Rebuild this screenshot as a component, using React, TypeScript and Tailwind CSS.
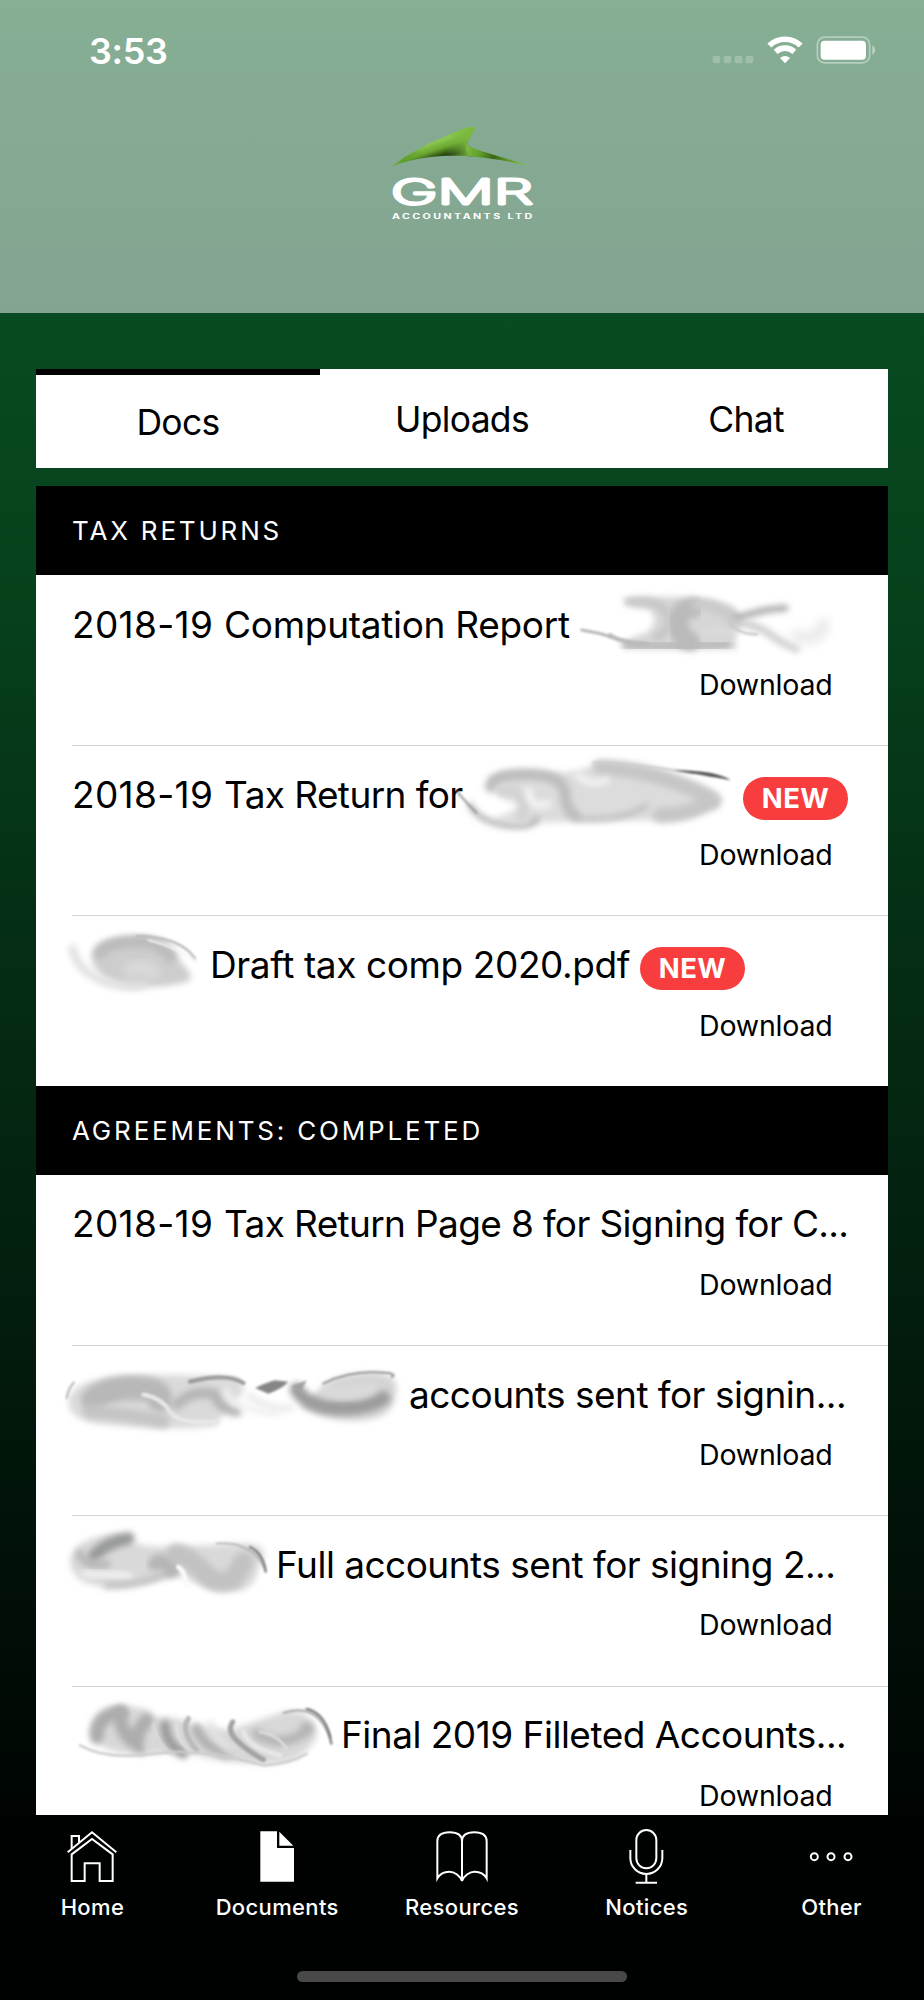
import React from "react";

type Stroke = { d: string; w?: number; c: string; fill?: boolean; blur: "s" | "m" | "l" };

interface SmudgeProps {
  viewBox: string;
  className: string;
  strokes: Stroke[];
}

// finger-painted redaction over a client name
function Smudge({ viewBox, className, strokes }: SmudgeProps) {
  return (
    <svg viewBox={viewBox} className={`h-[62px] shrink-0 overflow-visible ${className}`} fill="none" strokeLinecap="round">
      {strokes.map((s, i) => (
        <g key={i} filter={`url(#blur-${s.blur})`}>
          <path d={s.d} stroke={s.fill ? "none" : s.c} strokeWidth={s.w} fill={s.fill ? s.c : "none"} />
        </g>
      ))}
    </svg>
  );
}

function BlurDefs() {
  return (
    <svg className="absolute h-0 w-0">
      <defs>
        <filter id="blur-s" x="-50%" y="-150%" width="200%" height="400%"><feGaussianBlur stdDeviation="3.5" /></filter>
        <filter id="blur-m" x="-50%" y="-150%" width="200%" height="400%"><feGaussianBlur stdDeviation="10" /></filter>
        <filter id="blur-l" x="-50%" y="-150%" width="200%" height="400%"><feGaussianBlur stdDeviation="14" /></filter>
      </defs>
    </svg>
  );
}

const reportSmudge: Stroke[] = [
  { d: "M490 90Q640 75 740 90T830 140L840 170Q820 190 830 240H490Q470 215 560 190Q600 160 570 120Q520 120 490 90Z", c: "#d6d6d6", fill: true, blur: "m" },
  { d: "M505 98Q600 85 625 140Q640 180 590 205", w: 24, c: "#c6c6c6", blur: "m" },
  { d: "M700 115Q650 120 655 165T690 215", w: 60, c: "#bababa", blur: "m" },
  { d: "M710 105Q770 105 830 150", w: 34, c: "#cacaca", blur: "m" },
  { d: "M720 190Q770 175 830 190", w: 12, c: "#dedede", blur: "m" },
  { d: "M500 226Q650 236 800 226", w: 28, c: "#b9b9b9", blur: "m" },
  { d: "M450 198Q480 218 560 224", w: 13, c: "#bababa", blur: "s" },
  { d: "M365 182Q425 192 450 202", w: 9, c: "#b8b8b8", blur: "s" },
  { d: "M825 150Q900 120 975 116", w: 20, c: "#a8a8a8", blur: "m" },
  { d: "M810 155Q890 165 930 195T1010 238", w: 22, c: "#cdcdcd", blur: "m" },
  { d: "M810 165Q840 195 890 195", w: 8, c: "#c9c9c9", blur: "s" },
  { d: "M1010 200Q1080 220 1090 165", w: 40, c: "#ebebeb", blur: "l" },
];

const returnSmudge: Stroke[] = [
  { d: "M90 625Q150 595 240 605T400 585T620 605T790 685Q720 750 600 750T320 755T90 745Q160 730 180 700Q100 690 90 625Z", c: "#dcdcdc", fill: true, blur: "m" },
  { d: "M92 650Q90 612 200 612T315 670Q320 725 345 735", w: 34, c: "#bdbdbd", blur: "m" },
  { d: "M30 705Q60 755 140 765T230 745", w: 17, c: "#b0b0b0", blur: "m" },
  { d: "M180 745Q205 710 180 680Q160 650 120 665", w: 22, c: "#d0d0d0", blur: "m" },
  { d: "M205 660Q210 720 265 700", w: 20, c: "#f6f6f6", blur: "m" },
  { d: "M420 590Q560 600 680 650T740 700Q680 735 600 735", w: 44, c: "#c6c6c6", blur: "m" },
  { d: "M350 745Q490 755 560 705", w: 13, c: "#b9b9b9", blur: "m" },
  { d: "M355 615Q390 650 440 630", w: 18, c: "#f6f6f6", blur: "m" },
  { d: "M400 577Q580 588 700 608", w: 7, c: "#cdcdcd", blur: "s" },
  { d: "M640 600Q770 600 812 630Q770 622 640 600Z", w: 3, c: "#4e5050", fill: true, blur: "s" },
  { d: "M-8 664Q12 690 50 728", w: 6, c: "#9a9a9a", blur: "s" },
];

const draftSmudge: Stroke[] = [
  { d: "M215 650Q215 590 340 590T480 665Q520 700 510 722Q440 745 330 740Q220 720 215 650Z", c: "#cdcdcd", fill: true, blur: "m" },
  { d: "M240 640Q260 608 340 605T450 650", w: 34, c: "#bbbbbb", blur: "m" },
  { d: "M330 690Q370 670 400 700", w: 40, c: "#dadada", blur: "l" },
  { d: "M158 625Q165 680 230 715T370 735", w: 24, c: "#e0e0e0", blur: "m" },
  { d: "M385 600Q480 625 530 668", w: 6, c: "#f4f4f4", blur: "s" },
  { d: "M350 588Q480 590 525 655", w: 7, c: "#b8b8b8", blur: "s" },
];

const accountsSmudge: Stroke[] = [
  { d: "M115 190Q115 115 300 108T620 115Q660 150 620 180T560 258Q440 275 240 255Q120 250 115 190Z", c: "#dadada", fill: true, blur: "m" },
  { d: "M190 180Q230 145 310 145T390 180", w: 74, c: "#b8b8b8", blur: "m" },
  { d: "M180 215Q300 225 400 245", w: 40, c: "#c4c4c4", blur: "m" },
  { d: "M340 165Q395 175 420 215T560 245", w: 13, c: "#e8e8e8", blur: "s" },
  { d: "M440 195Q490 145 555 165Q570 210 620 215", w: 32, c: "#b5b5b5", blur: "m" },
  { d: "M590 155Q590 190 670 210T740 215", w: 20, c: "#f1f1f1", blur: "m" },
  { d: "M480 126Q590 98 640 130", w: 13, c: "#9c9c9c", blur: "s" },
  { d: "M660 170Q710 210 780 205", w: 24, c: "#ededed", blur: "m" },
  { d: "M675 145Q710 128 735 122L775 126Q760 145 715 162Z", c: "#868686", fill: true, blur: "s" },
  { d: "M110 175Q115 145 132 128", w: 5, c: "#a8a8a8", blur: "s" },
  { d: "M870 150Q900 105 1010 100T1095 170Q1090 238 990 243T810 200Z", c: "#d4d4d4", fill: true, blur: "m" },
  { d: "M800 150Q830 200 920 205T1060 175", w: 42, c: "#9c9c9c", blur: "m" },
  { d: "M890 155Q960 170 1020 145", w: 34, c: "#dadada", blur: "m" },
  { d: "M880 132Q950 97 1030 98T1085 112", w: 6, c: "#929292", blur: "s" },
  { d: "M785 140L830 122L810 160Z", c: "#a2a2a2", fill: true, blur: "s" },
];

const fullSmudge: Stroke[] = [
  { d: "M120 660Q130 590 270 578Q300 620 400 618T620 610T685 680Q680 750 610 752T490 725T390 715Q250 760 160 725Q120 700 120 660Z", c: "#d9d9d9", fill: true, blur: "m" },
  { d: "M190 650Q220 610 295 594", w: 38, c: "#989a9a", blur: "m" },
  { d: "M150 640Q155 675 230 672", w: 26, c: "#b8b8b8", blur: "m" },
  { d: "M165 700Q240 700 300 708", w: 18, c: "#f6f6f6", blur: "m" },
  { d: "M230 737Q330 735 400 705T420 650", w: 17, c: "#bcbcbc", blur: "m" },
  { d: "M375 670Q400 650 425 690", w: 44, c: "#b5b5b5", blur: "m" },
  { d: "M440 640Q480 650 520 695T610 715L640 665", w: 60, c: "#c2c2c2", blur: "m" },
  { d: "M468 738Q468 695 445 680", w: 14, c: "#fafafa", blur: "s" },
  { d: "M560 610Q660 602 702 680", w: 5, c: "#b0b0b0", blur: "s" },
  { d: "M660 620Q700 640 707 694", w: 7, c: "#757777", blur: "s" },
];

const finalSmudge: Stroke[] = [
  { d: "M180 1180Q180 1100 270 1098T370 1130Q460 1130 480 1150L600 1170Q680 1140 760 1115Q850 1100 860 1190Q820 1270 710 1270T520 1250T370 1240Q210 1250 180 1180Z", c: "#d8d8d8", fill: true, blur: "m" },
  { d: "M200 1190Q200 1125 275 1115", w: 40, c: "#ababab", blur: "m" },
  { d: "M270 1120Q270 1180 320 1210Q320 1170 350 1140", w: 42, c: "#adadad", blur: "m" },
  { d: "M405 1155Q405 1210 460 1240", w: 30, c: "#9a9a9a", blur: "m" },
  { d: "M475 1135Q450 1170 500 1230", w: 16, c: "#b9b9b9", blur: "s" },
  { d: "M500 1165Q515 1215 590 1240", w: 30, c: "#b0b0b0", blur: "m" },
  { d: "M440 1150Q435 1200 490 1240", w: 8, c: "#e0e0e0", blur: "s" },
  { d: "M370 1150Q380 1210 430 1245", w: 7, c: "#dcdcdc", blur: "s" },
  { d: "M540 1150Q550 1190 600 1230", w: 20, c: "#e4e4e4", blur: "m" },
  { d: "M608 1145Q590 1170 620 1200T700 1258", w: 16, c: "#a3a3a3", blur: "s" },
  { d: "M640 1175Q660 1225 750 1245", w: 14, c: "#e8e8e8", blur: "s" },
  { d: "M680 1180Q740 1220 800 1190T825 1160", w: 30, c: "#b5b5b5", blur: "m" },
  { d: "M690 1175Q740 1180 770 1225", w: 8, c: "#e0e0e0", blur: "s" },
  { d: "M150 1215Q230 1260 370 1240T700 1275Q780 1270 830 1240", w: 8, c: "#cccccc", blur: "s" },
  { d: "M760 1118Q860 1085 900 1190", w: 6, c: "#a8a8a8", blur: "s" },
  { d: "M830 1106Q890 1120 904 1210", w: 7, c: "#767878", blur: "s" },
];

function NewBadge() {
  return (
    <span className="mt-[7px] flex h-[43px] w-[105px] shrink-0 items-center justify-center rounded-full bg-[#f73d3d] text-[27.5px] font-bold tracking-[0.4px] text-white">
      NEW
    </span>
  );
}

function DocRow({ children, first }: { children: React.ReactNode; first?: boolean }) {
  return (
    <div className="h-[170.33px] bg-white pl-9">
      <div className={`h-full ${first ? "pt-[18.5px]" : "border-t border-[#d4d4d6] pt-[17.5px]"}`}>
        <div className="flex h-[62px] items-center whitespace-nowrap text-[37px] text-black">{children}</div>
        <div className="flex h-[60px] items-center justify-end pr-[55.5px] text-[28.5px] tracking-[-0.2px] text-black">Download</div>
      </div>
    </div>
  );
}

function SectionHeader({ title }: { title: string }) {
  return (
    <div className="flex h-[88.8px] items-center bg-black pl-9 pt-px text-[26px] tracking-[2.82px] text-white">
      {title}
    </div>
  );
}

function TaxYear() {
  return <span className="tracking-[0.35px]">2018-19 </span>;
}

function Logo() {
  return (
    <svg viewBox="0 0 150 100" className="h-[100px] w-[150px]">
      <defs>
        <linearGradient id="swoosh" x1="50" y1="4" x2="59" y2="31" gradientUnits="userSpaceOnUse">
          <stop offset="0.35" stopColor="#8bc750" />
          <stop offset="0.62" stopColor="#69a52f" />
          <stop offset="0.84" stopColor="#2d5010" />
          <stop offset="0.97" stopColor="#14260a" />
        </linearGradient>
        <linearGradient id="swooshFold" x1="58" y1="0" x2="84" y2="0" gradientUnits="userSpaceOnUse">
          <stop offset="0" stopColor="#7ab840" stopOpacity="0" />
          <stop offset="1" stopColor="#7ab840" />
        </linearGradient>
        <linearGradient id="swooshTail" x1="80" y1="20" x2="144" y2="39" gradientUnits="userSpaceOnUse">
          <stop offset="0" stopColor="#7ab840" />
          <stop offset="0.2" stopColor="#62a02c" />
          <stop offset="0.42" stopColor="#386818" />
          <stop offset="0.65" stopColor="#5c9a28" />
          <stop offset="1" stopColor="#93cf58" />
        </linearGradient>
        <linearGradient id="swooshTip" x1="5" y1="0" x2="36" y2="0" gradientUnits="userSpaceOnUse">
          <stop offset="0" stopColor="#7db05c" />
          <stop offset="0.35" stopColor="#5f9f2c" />
          <stop offset="1" stopColor="#5f9f2c" stopOpacity="0" />
        </linearGradient>
      </defs>
      <path d="M5 39.500C12 34 17 30 23 27C33 21 44 15 56 10.500C63 7 70 4 76 2C81 0.500 84 0 86 0C88.500 0 88 2 87 4L81 14C79 18 82 20 88 22L90 30C70 28 35 27 5 39.500Z" fill="url(#swoosh)" />
      <path d="M58 9.600C63 7 70 4 76 2C81 0.500 84 0 86 0C88.500 0 88 2 87 4L81 14C79 18 82 20 88 22L90 30C80 29 70 28.700 58 29Z" fill="url(#swooshFold)" />
      <path d="M81 14C79 18 82 20 88 22C103 27 122 32 145 39.500C125 35 108 31.500 88 30C80 28 76 24 81 14Z" fill="url(#swooshTail)" />
      <path d="M5 39.500C12 34 17 30 23 27C30 23 36 19 42 16.500V29C26 31 13 36 5 39.500Z" fill="url(#swooshTip)" />
      <text x="4" y="77" fontFamily="Inter, sans-serif" fontSize="34" fontWeight="200" fill="#fff" stroke="#fff" strokeWidth="2.800" strokeLinejoin="round" textLength="142" lengthAdjust="spacingAndGlyphs">GMR</text>
      <text transform="translate(5 91.500) scale(1.550 1)" fontFamily="Inter, sans-serif" fontSize="6.900" fontWeight="700" fill="#fff" textLength="90.500">ACCOUNTANTS LTD</text>
    </svg>
  );
}

function StatusBar() {
  return (
    <div className="flex h-[100px] items-center justify-between pl-[89px] pr-[48px] text-white">
      <span className="pt-px text-[36px] font-[560] tracking-[-0.3px]">3:53</span>
      <div className="flex items-center">
        <svg viewBox="0 0 126 84" className="h-7 w-[42px]" fill="#fff" fillOpacity="0.22">
          <rect x="2" y="59" width="23" height="23" rx="6" />
          <rect x="35" y="59" width="23" height="23" rx="6" />
          <rect x="68" y="59" width="23" height="23" rx="6" />
          <rect x="101" y="59" width="23" height="23" rx="6" />
        </svg>
        <svg viewBox="0 0 108 84" className="ml-[13px] h-7 w-9" fill="none" stroke="#fff" strokeWidth="17">
          <path d="M7 28.500A68 68 0 0 1 101 28.500" />
          <path d="M26 47.500A41 41 0 0 1 82 47.500" />
          <path d="M54 82L39 66Q54 54 69 66Z" fill="#fff" stroke="none" />
        </svg>
        <svg viewBox="0 0 180 84" className="ml-[13px] h-7 w-[60px]">
          <rect x="4" y="3.500" width="157" height="77" rx="22" fill="none" stroke="#fff" strokeOpacity="0.4" strokeWidth="5" />
          <rect x="14" y="14" width="136" height="57" rx="12" fill="#fff" />
          <path d="M169 28Q178 33 178 42T169 56Z" fill="#fff" fillOpacity="0.45" />
        </svg>
      </div>
    </div>
  );
}

function NavItem({ label, children }: { label: string; children: React.ReactNode }) {
  return (
    <div className="flex flex-1 flex-col items-center pt-[13.500px]">
      <svg viewBox="0 0 180 174" className="h-[58px] w-[60px]" fill="none" stroke="#fff" strokeWidth="6">
        {children}
      </svg>
      <span className="mt-[7px] text-[22px] font-medium leading-[28px] tracking-[0.35px] text-white">{label}</span>
    </div>
  );
}

export default function App() {
  return (
    <div className="flex h-[2000px] w-[924px] flex-col overflow-hidden bg-[linear-gradient(to_bottom,#0a5628_0,#084b22_312px,#06411c_600px,#053015_900px,#03200f_1250px,#010f07_1600px,#000302_1850px,#000_2000px)] font-['Inter',sans-serif]">
      <BlurDefs />
      <header className="flex h-[312.500px] shrink-0 flex-col bg-[linear-gradient(to_bottom,#86af94,#83a491)]">
        <StatusBar />
        <div className="mt-[27px] flex justify-center">
          <Logo />
        </div>
      </header>

      <main className="flex min-h-0 flex-1 flex-col overflow-hidden px-9 pt-[56px]">
        <div className="grid h-[99.500px] shrink-0 grid-cols-3 bg-white text-[35.5px] tracking-[-0.7px] text-black">
          <div className="flex items-center justify-center border-t-[6.5px] border-black pt-[3px]">Docs</div>
          <div className="flex items-center justify-center pt-[3px]">Uploads</div>
          <div className="flex items-center justify-center pt-[3px]">Chat</div>
        </div>

        <div className="mt-[18px]">
          <SectionHeader title="TAX RETURNS" />
          <DocRow first>
            <span className="w-[497px] whitespace-pre tracking-[-0.3px]"><TaxYear />Computation Report</span>
            <Smudge viewBox="327 71 780 186" className="w-[260px]" strokes={reportSmudge} />
          </DocRow>
          <DocRow>
            <span className="w-[388px] whitespace-pre tracking-[-0.6px]"><TaxYear />Tax Return for</span>
            <Smudge viewBox="0 581 849 186" className="w-[283px]" strokes={returnSmudge} />
            <NewBadge />
          </DocRow>
          <DocRow>
            <Smudge viewBox="156 582 414 186" className="w-[138px]" strokes={draftSmudge} />
            <span className="w-[430px] tracking-[-0.4px]">Draft tax comp 2020.pdf</span>
            <NewBadge />
          </DocRow>

          <SectionHeader title="AGREEMENTS: COMPLETED" />
          <DocRow first>
            <span className="whitespace-pre tracking-[-0.65px]"><TaxYear />Tax Return Page 8 for Signing for C...</span>
          </DocRow>
          <DocRow>
            <Smudge viewBox="126 70 1011 186" className="w-[337px]" strokes={accountsSmudge} />
            <span className="tracking-[-0.52px]">accounts sent for signin...</span>
          </DocRow>
          <DocRow>
            <Smudge viewBox="126 581 612 186" className="w-[204px]" strokes={fullSmudge} />
            <span className="tracking-[-0.52px]">Full accounts sent for signing 2...</span>
          </DocRow>
          <DocRow>
            <Smudge viewBox="126 1091 807 186" className="w-[269px]" strokes={finalSmudge} />
            <span className="tracking-[-0.5px]">Final 2019 Filleted Accounts...</span>
          </DocRow>
        </div>
      </main>

      <nav className="flex h-[185.500px] shrink-0 flex-col items-center bg-[#000201]">
        <div className="flex h-[156.500px] w-full">
          <NavItem label="Home">
            <path d="M17 73L90 13L163 73" />
            <path d="M29 79L90 33L152 79V159H113V106H68V159H29Z" />
            <path d="M29 62V24H51V43" />
          </NavItem>
          <NavItem label="Documents">
            <path d="M40 10H90V60H141V161H40Z" fill="#fff" stroke="none" />
            <path d="M97 11L139 53H97Z" fill="#fff" stroke="none" />
          </NavItem>
          <NavItem label="Resources">
            <path d="M16 151V40C16 20 30 13 53 13S90 20 90 40V159C84 142 66 131 52 131S25 135 16 151Z" />
            <path d="M164 151V40C164 20 150 13 127 13S90 20 90 40V159C96 142 114 131 128 131S155 135 164 151Z" />
          </NavItem>
          <NavItem label="Notices">
            <rect x="58" y="6" width="60" height="115" rx="30" />
            <path d="M40 66V90A48 48 0 0 0 136 90V66M88 138V164M56 164H120" />
          </NavItem>
          <NavItem label="Other">
            <circle cx="37" cy="86" r="10.500" />
            <circle cx="87" cy="86" r="10.500" />
            <circle cx="138" cy="86" r="10.500" />
          </NavItem>
        </div>
        <div className="h-[11px] w-[330px] rounded-full bg-[#484848]" />
      </nav>
    </div>
  );
}
